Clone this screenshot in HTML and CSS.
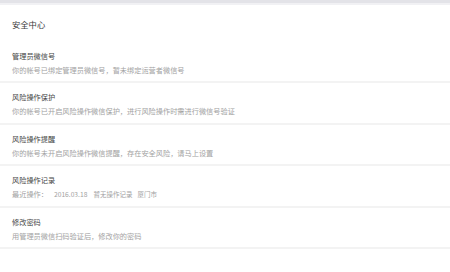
FILE: index.html
```html
<!DOCTYPE html>
<html lang="zh-CN">
<head>
<meta charset="utf-8">
<title>安全中心</title>
<link rel="stylesheet" href="styles.css">
</head>
<body>
<div class="topbar"></div>
<div class="panel">
  <div class="panel-title">安全中心</div>
  <ul class="rows">
    <li class="row">
      <div class="row-title">管理员微信号</div>
      <div class="row-desc">你的帐号已绑定管理员微信号，暂未绑定运营者微信号</div>
    </li>
    <li class="row">
      <div class="row-title">风险操作保护</div>
      <div class="row-desc">你的帐号已开启风险操作微信保护，进行风险操作时需进行微信号验证</div>
    </li>
    <li class="row">
      <div class="row-title">风险操作提醒</div>
      <div class="row-desc">你的帐号未开启风险操作微信提醒，存在安全风险，请马上设置</div>
    </li>
    <li class="row">
      <div class="row-title">风险操作记录</div>
      <div class="row-desc"><span class="seg-label">最近操作：</span><span class="seg-date">2016.03.18</span><span class="seg-small">暂无操作记录</span><span class="seg-small seg-last">厦门市</span></div>
    </li>
    <li class="row">
      <div class="row-title">修改密码</div>
      <div class="row-desc">用管理员微信扫码验证后，修改你的密码</div>
    </li>
  </ul>
</div>
</body>
</html>
```

FILE: styles.css
```css
html, body {
  margin: 0;
  padding: 0;
  background: #ffffff;
  font-family: "Noto Sans CJK SC", "Noto Sans", sans-serif;
}

.topbar {
  height: 3px;
  background: #e3e3e8;
  border-bottom: 2px solid #f1f1f4;
}

.panel-title {
  margin: 13px 0 0 12px;
  height: 12px;
  line-height: 12px;
  font-size: 8.3px;
  color: #3a3a3a;
}

.rows {
  list-style: none;
  margin: 11.5px 0 0 0;
  padding: 0;
}

.row {
  padding: 9px 12px 5.5px 12px;
  border-bottom: 2px solid #f3f3f3;
}

.row-title {
  height: 11px;
  line-height: 11px;
  font-size: 7.2px;
  color: #444444;
}

.row-desc {
  margin-top: 3px;
  height: 11px;
  line-height: 11px;
  font-size: 7.2px;
  color: #a2a2a2;
  white-space: nowrap;
}

.seg-label {
  margin-right: 6px;
}

.seg-date {
  font-size: 6.7px;
  margin-right: 6px;
}

.seg-small {
  font-size: 6.5px;
  margin-right: 5px;
}

.seg-last {
  margin-right: 0;
}
```
